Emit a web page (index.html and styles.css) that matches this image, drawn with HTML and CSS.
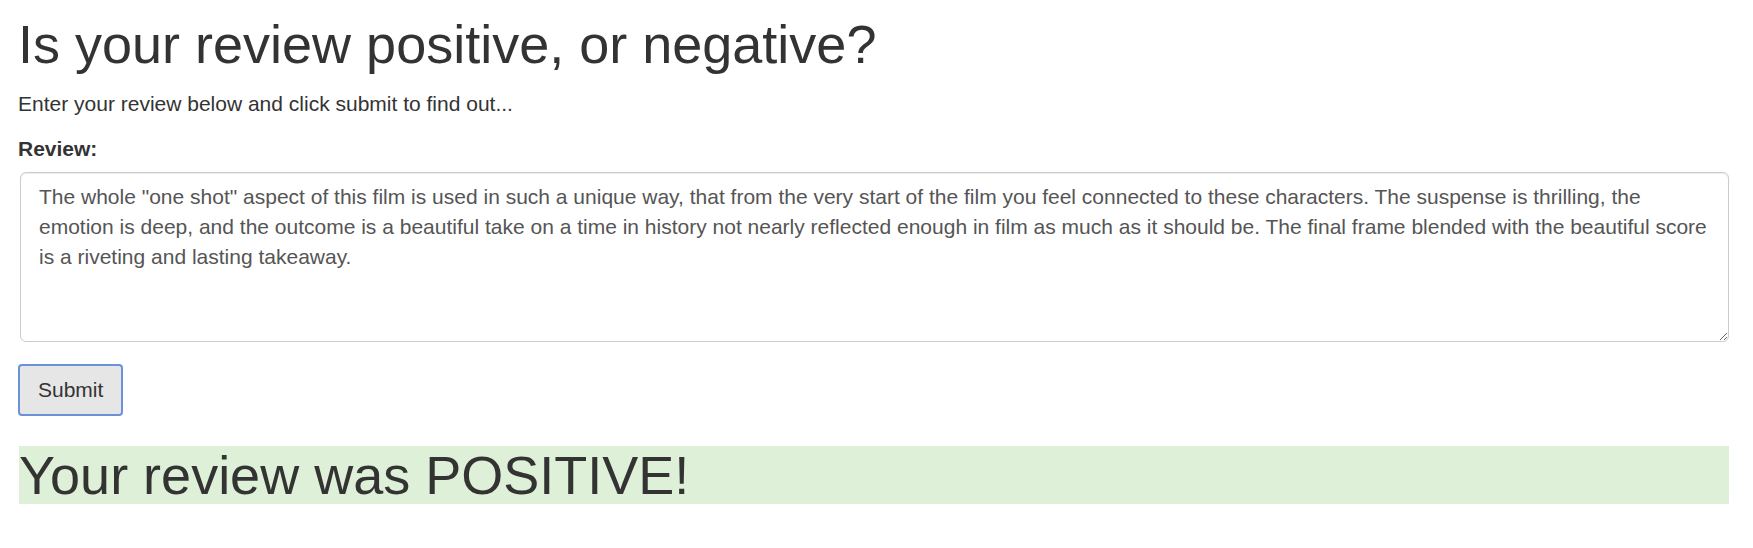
FILE: index.html
```html
<!DOCTYPE html>
<html lang="en">
<head>
<meta charset="utf-8">
<title>Sentiment</title>
<link rel="stylesheet" href="styles.css">
</head>
<body>
<div class="container">
  <h1 class="title">Is your review positive, or negative?</h1>
  <p class="intro">Enter your review below and click submit to find out...</p>
  <form class="review-form">
    <div class="form-group">
      <label class="label" for="review">Review:</label>
      <textarea id="review" class="form-control" rows="5">The whole "one shot" aspect of this film is used in such a unique way, that from the very start of the film you feel connected to these characters. The suspense is thrilling, the emotion is deep, and the outcome is a beautiful take on a time in history not nearly reflected enough in film as much as it should be. The final frame blended with the beautiful score is a riveting and lasting takeaway.</textarea>
    </div>
    <button type="button" class="btn">Submit</button>
  </form>
  <h1 class="result">Your review was POSITIVE!</h1>
</div>
</body>
</html>
```

FILE: styles.css
```css
* { box-sizing: border-box; }

html, body {
  margin: 0;
  padding: 0;
  background: #fff;
}

body {
  font-family: "Liberation Sans", Arial, Helvetica, sans-serif;
  font-size: 21px;
  line-height: 30px;
  color: #333;
}

.container {
  padding: 15px 24px 0 18px;
}

.title {
  font-size: 54px;
  font-weight: 400;
  line-height: 1.1;
  margin: 0 0 15px 0;
}

.intro {
  margin: 0 0 15px 0;
}

.review-form {
  margin: 0;
}

.form-group {
  margin-bottom: 22px;
}

.label {
  display: inline-block;
  font-weight: 700;
  margin-bottom: 8px;
}

.form-control {
  display: block;
  width: calc(100% - 2px);
  margin-left: 2px;
  height: 170px;
  padding: 9px 18px;
  font-family: inherit;
  font-size: 21px;
  line-height: 30px;
  color: #555;
  background: #fff;
  border: 1px solid #ccc;
  border-radius: 6px;
  box-shadow: inset 0 1px 1px rgba(0, 0, 0, 0.075);
  resize: vertical;
}

.btn {
  display: inline-block;
  font-family: inherit;
  font-size: 21px;
  line-height: 30px;
  color: #333;
  background: #e6e6e6;
  border: 2px solid #6b92d8;
  border-radius: 4px;
  padding: 9px 18px;
  margin: 0;
}

.result {
  font-size: 54px;
  font-weight: 400;
  line-height: 58px;
  margin: 30px 0 0 1px;
  background: #dff0d8;
  color: #333;
}
```
